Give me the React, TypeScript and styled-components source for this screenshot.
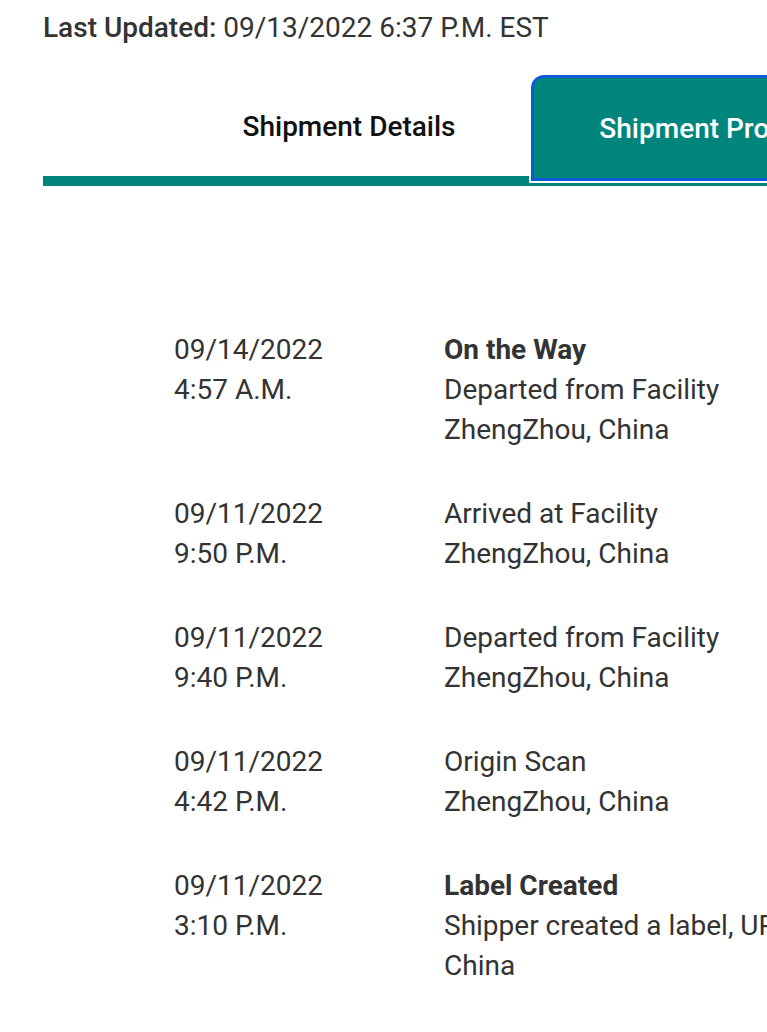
import styled, { createGlobalStyle } from "styled-components";

const TEAL = "#00857d";

const GlobalStyle = createGlobalStyle`
  html, body {
    margin: 0;
    padding: 0;
    background: #fff;
    overflow-x: hidden;
  }
  body {
    font-family: Roboto, "Liberation Sans", Arial, sans-serif;
    color: #333;
  }
`;

type Activity = {
  date: string;
  time: string;
  status?: string;
  lines: string[];
};

const ACTIVITY: Activity[] = [
  {
    date: "09/14/2022",
    time: "4:57 A.M.",
    status: "On the Way",
    lines: ["Departed from Facility", "ZhengZhou, China"],
  },
  {
    date: "09/11/2022",
    time: "9:50 P.M.",
    lines: ["Arrived at Facility", "ZhengZhou, China"],
  },
  {
    date: "09/11/2022",
    time: "9:40 P.M.",
    lines: ["Departed from Facility", "ZhengZhou, China"],
  },
  {
    date: "09/11/2022",
    time: "4:42 P.M.",
    lines: ["Origin Scan", "ZhengZhou, China"],
  },
  {
    date: "09/11/2022",
    time: "3:10 P.M.",
    status: "Label Created",
    lines: ["Shipper created a label, UPS has not received the package yet.", "China"],
  },
];

function App() {
  return (
    <Page>
      <GlobalStyle />
      <Updated>
        <strong>Last Updated:</strong> 09/13/2022 6:37 P.M. EST
      </Updated>
      <TabList>
        <Tab>Shipment Details</Tab>
        <Tab $active>Shipment Progress</Tab>
      </TabList>
      <Progress>
        {ACTIVITY.map((item, index) => (
          <Row key={index}>
            <DateCell>
              <div>{item.date}</div>
              <div>{item.time}</div>
            </DateCell>
            <Detail>
              {item.status && <Status>{item.status}</Status>}
              {item.lines.map((line, i) => (
                <div key={i}>{line}</div>
              ))}
            </Detail>
          </Row>
        ))}
      </Progress>
    </Page>
  );
}

const Page = styled.div`
  width: 982px;
  padding: 8px 0 40px 43px;
`;

const Updated = styled.div`
  font-size: 28px;
  line-height: 40px;
  color: #333;

  strong {
    font-weight: 500;
  }
`;

const TabList = styled.div`
  display: flex;
  justify-content: center;
  align-items: flex-end;
  margin-top: 28px;
  border-bottom: 10px solid ${TEAL};
`;

const Tab = styled.div<{ $active?: boolean }>`
  width: 370px;
  height: 100px;
  display: flex;
  align-items: center;
  justify-content: center;
  font-size: 28px;
  font-weight: 500;
  color: ${(p) => (p.$active ? "#fff" : "#111")};
  background: ${(p) => (p.$active ? TEAL : "transparent")};
  border-radius: ${(p) => (p.$active ? "10px 10px 0 0" : "0")};
  margin-bottom: ${(p) => (p.$active ? "-2px" : "0")};
  box-shadow: ${(p) => (p.$active ? "0 0 0 3px #0a5bd8, 0 0 0 5px #fff" : "none")};
  position: relative;
`;

const Progress = styled.div`
  padding: 144px 0 0 131px;
`;

const Row = styled.div`
  display: grid;
  grid-template-columns: 270px 1fr;
  font-size: 28px;
  line-height: 40px;
  margin-bottom: 44px;
`;

const DateCell = styled.div`
  white-space: nowrap;
`;

const Detail = styled.div`
  white-space: nowrap;
`;

const Status = styled.div`
  font-weight: 700;
`;

export default App;
